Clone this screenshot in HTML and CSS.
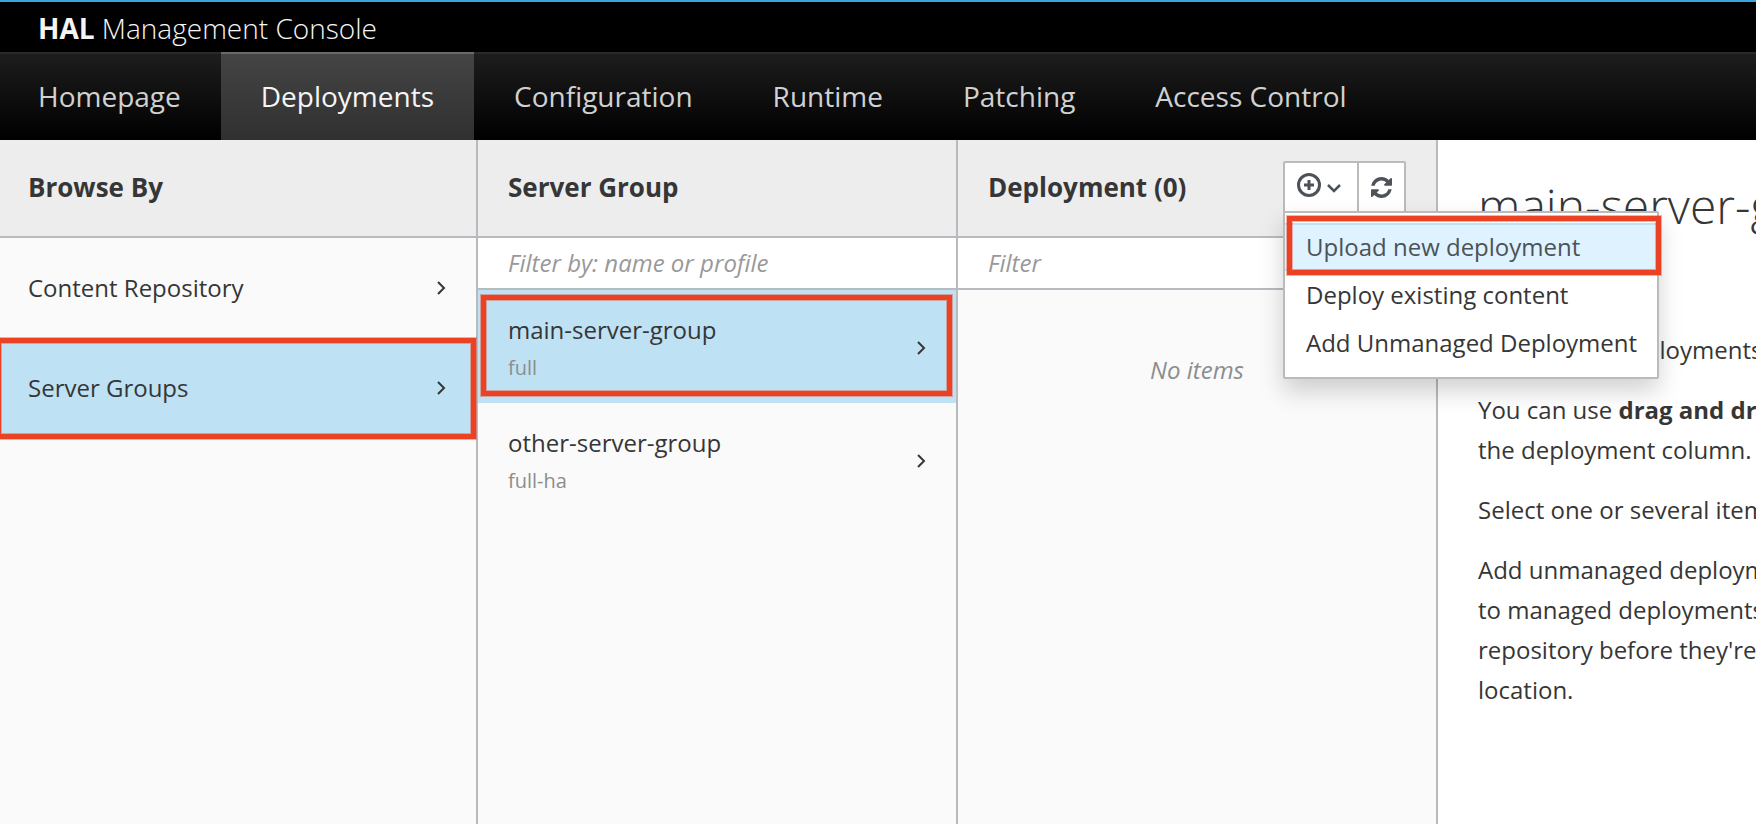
FILE: index.html
```
<!DOCTYPE html>
<html lang="en">
<head>
<meta charset="utf-8">
<title>HAL Management Console</title>
<link rel="stylesheet" href="styles.css">
</head>
<body>
<header class="masthead"><strong>HAL</strong> Management Console</header>
<nav class="nav">
  <a class="nav-link" href="#">Homepage</a>
  <a class="nav-link active" href="#" aria-current="page">Deployments</a>
  <a class="nav-link" href="#">Configuration</a>
  <a class="nav-link" href="#">Runtime</a>
  <a class="nav-link" href="#">Patching</a>
  <a class="nav-link" href="#">Access Control</a>
</nav>
<main class="finder">
  <section class="column">
    <div class="column-head"><h2 class="column-title">Browse By</h2></div>
    <ul class="items">
      <li><a class="item single" href="#"><span class="item-name">Content Repository</span>
        <svg class="chevron" viewBox="0 0 10 16" aria-hidden="true"><path d="M2 2l6 6-6 6"/></svg></a></li>
      <li><a class="item single selected" href="#"><span class="item-name">Server Groups</span>
        <svg class="chevron" viewBox="0 0 10 16" aria-hidden="true"><path d="M2 2l6 6-6 6"/></svg>
        <span class="mark mark-groups"></span></a></li>
    </ul>
  </section>
  <section class="column">
    <div class="column-head"><h2 class="column-title">Server Group</h2></div>
    <input class="filter" type="text" placeholder="Filter by: name or profile" aria-label="Filter server groups">
    <ul class="items">
      <li><a class="item selected" href="#"><span class="item-name">main-server-group<small class="item-note">full</small></span>
        <svg class="chevron" viewBox="0 0 10 16" aria-hidden="true"><path d="M2 2l6 6-6 6"/></svg>
        <span class="mark mark-main"></span></a></li>
      <li><a class="item" href="#"><span class="item-name">other-server-group<small class="item-note">full-ha</small></span>
        <svg class="chevron" viewBox="0 0 10 16" aria-hidden="true"><path d="M2 2l6 6-6 6"/></svg></a></li>
    </ul>
  </section>
  <section class="column">
    <div class="column-head">
      <h2 class="column-title">Deployment (0)</h2>
      <div class="actions">
        <button class="btn btn-add" type="button" aria-label="Add deployment" aria-expanded="true">
          <svg class="icon-add" viewBox="0 0 24 24" aria-hidden="true"><circle cx="12" cy="12" r="10.5"/><path d="M12 7v10M7 12h10"/></svg>
          <svg class="icon-caret" viewBox="0 0 14 10" aria-hidden="true"><path d="M1 2l6 6 6-6"/></svg>
        </button>
        <button class="btn btn-refresh" type="button" aria-label="Refresh">
          <svg class="icon-refresh" viewBox="0 0 1536 1536" aria-hidden="true"><path d="M1511 928q0 5-1 7-64 268-268 434.500T764 1536q-146 0-282.500-55T238 1324l-129 129q-19 19-45 19t-45-19-19-45V960q0-26 19-45t45-19h448q26 0 45 19t19 45-19 45l-137 137q71 66 161 102t187 36q134 0 250-65t186-179q11-17 53-117 8-23 30-23h192q13 0 22.500 9.500t9.500 22.500zM1536 128v448q0 26-19 45t-45 19h-448q-26 0-45-19t-19-45 19-45l138-138Q969 256 768 256q-134 0-250 65T332 500q-11 17-53 117-8 23-30 23H50q-13 0-22.500-9.500T18 608v-7q65-268 270-434.500T768 0q146 0 284 55.500T1297 212l130-129q19-19 45-19t45 19 19 45z"/></svg>
        </button>
        <ul class="menu">
          <li><a class="menu-item active" href="#">Upload new deployment</a></li>
          <li><a class="menu-item" href="#">Deploy existing content</a></li>
          <li><a class="menu-item" href="#">Add Unmanaged Deployment</a></li>
        </ul>
        <span class="mark mark-upload"></span>
      </div>
    </div>
    <input class="filter" type="text" placeholder="Filter" aria-label="Filter deployments">
    <p class="empty">No items</p>
  </section>
  <article class="preview">
    <h1 class="preview-title">main-server-group</h1>
    <p>Manage the deployments</p>
    <p>You can use <strong>drag and drop</strong><br>the deployment column.</p>
    <p>Select one or several items</p>
    <p>Add unmanaged deployments<br>to managed deployments<br>repository before they're<br>location.</p>
  </article>
</main>
</body>
</html>
```
FILE: styles.css
```
* { box-sizing: border-box; }
body {
  margin: 0;
  min-height: 100vh;
  display: flex;
  flex-direction: column;
  overflow: hidden;
  font: 24px/40px "Open Sans", sans-serif;
  color: #363636;
  background: #fff;
}
a { color: inherit; text-decoration: none; }
h1, h2, p, ul { margin: 0; padding: 0; }
ul { list-style: none; }

.masthead {
  padding: 6px 38px 4px;
  border-top: 2px solid #39a5dc;
  background: #000;
  color: #f5f5f5;
  font-size: 28px;
  font-weight: 300;
}
.masthead strong { font-weight: 700; }

.nav {
  display: flex;
  background: linear-gradient(#1d1d1d, #000);
  border-top: 2px solid #292929;
}
.nav-link {
  margin-top: -2px;
  padding: 23px 40px 25px;
  border-top: 2px solid transparent;
  color: #d1d1d1;
  font-size: 28px;
  line-height: 38px;
}
.nav-link:first-child { padding-left: 38px; }
.nav-link.active {
  color: #f5f5f5;
  background: linear-gradient(#444, #303030) padding-box;
  border-top-color: #6a6a6a;
}

.finder {
  flex: 1;
  display: grid;
  grid-template-columns: minmax(0, 478fr) minmax(0, 480fr) minmax(0, 480fr) minmax(0, 318fr);
}
.column {
  background: #fafafa;
  border-right: 2px solid #b7babf;
}
.column-head {
  display: flex;
  justify-content: space-between;
  align-items: center;
  height: 98px;
  padding: 0 30px 2px;
  background: #ededed;
  border-bottom: 2px solid #b7babf;
}
.column:first-child .column-head { padding-left: 28px; }
.column-title { font-size: 26px; font-weight: 700; line-height: 40px; }

.filter {
  display: block;
  width: 100%;
  height: 52px;
  padding: 0 30px 2px;
  border: 0;
  border-bottom: 2px solid #b7babf;
  border-radius: 0;
  background: #fff;
  font: inherit;
}
.filter::placeholder { color: #999; font-style: italic; opacity: 1; }

.item {
  position: relative;
  display: flex;
  justify-content: space-between;
  align-items: center;
  padding: 20px 30px 18px;
}
.item.single { padding: 30px 30px 30px 28px; }
.item.selected { background: #bee1f4; }
.item-note { display: block; font-size: 20px; line-height: 35px; color: #8b8d8f; }
.chevron { width: 10px; height: 16px; fill: none; stroke: #363636; stroke-width: 2; }

.mark {
  position: absolute;
  border: 5px solid #ec4224;
  box-shadow: 0 0 0 1px rgba(236, 66, 36, 0.4), inset 0 0 0 1px rgba(236, 66, 36, 0.4);
  pointer-events: none;
}
.mark-groups { inset: 0 0 -1px -4px; }
.mark-main { inset: 5px 4px 7px 3px; }
.mark-upload { z-index: 3; top: 55px; left: 4px; width: 374px; height: 59px; }

.actions { position: relative; display: flex; }
.btn {
  display: flex;
  align-items: center;
  height: 52px;
  padding: 0 12px;
  border: 2px solid #bbb;
  background: #fff;
}
.btn-add { gap: 6px; padding: 0 16px 4px 12px; border-radius: 2px 0 0 2px; }
.btn-refresh { margin-left: -2px; border-radius: 0 2px 2px 0; }
.icon-add { width: 24px; height: 24px; fill: none; stroke: #4d5258; stroke-width: 3; }
.icon-caret { width: 14px; height: 10px; margin-top: 6px; fill: none; stroke: #4d5258; stroke-width: 2.5; }
.icon-refresh { width: 21px; height: 21px; fill: #4d5258; }

.menu {
  position: absolute;
  z-index: 2;
  top: 50px;
  left: 0;
  padding: 10px 0;
  border: 2px solid #bbb;
  border-radius: 2px;
  background: #fff;
  box-shadow: 0 12px 24px rgba(0, 0, 0, 0.18);
  white-space: nowrap;
}
.menu-item { display: block; padding: 2px 20px 2px 21px; border: solid transparent; border-width: 2px 0; }
.menu-item.active { color: #4d5258; background: #def3ff; border-color: #bee1f4; }

.empty { padding: 60px 30px; text-align: center; font-style: italic; color: #8b8d8f; }

.preview { padding: 40px; overflow: hidden; white-space: nowrap; }
.preview-title { margin-bottom: 98px; font-size: 48px; font-weight: 300; line-height: 52px; }
.preview p { margin-bottom: 20px; }
```
